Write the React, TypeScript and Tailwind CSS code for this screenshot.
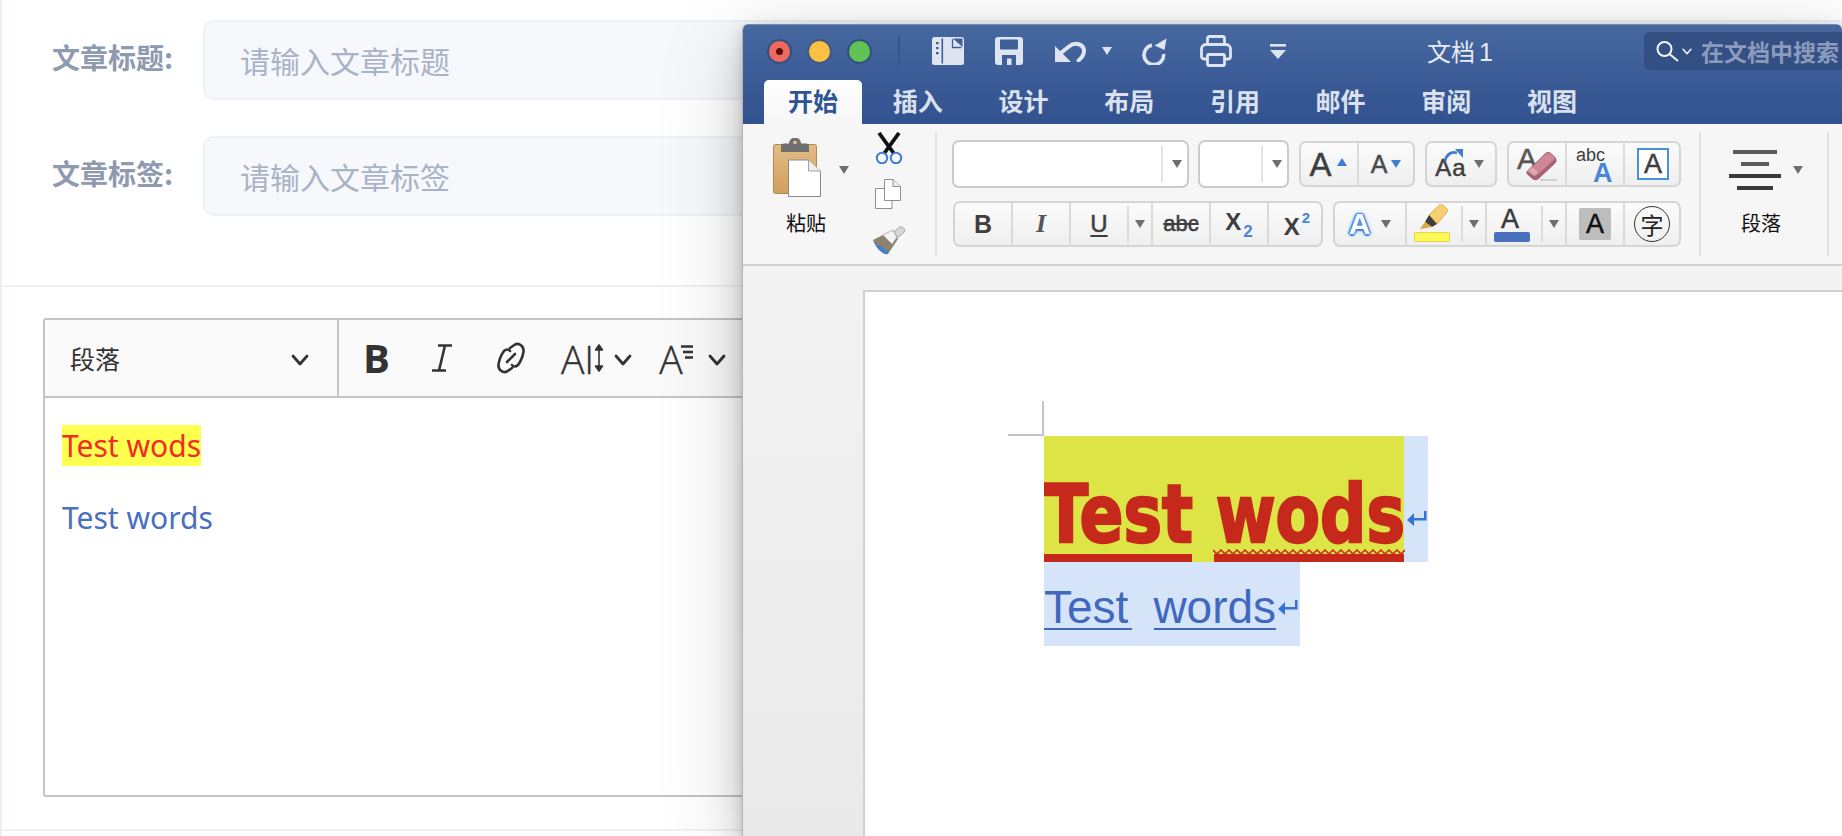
import React from "react";

const CJK = "font-['PingFang_SC','Noto_Sans_CJK_SC',sans-serif]";

function Caret({ className = "", up = false, color = "#6e6e6e", w = 10, h = 8 }: { className?: string; up?: boolean; color?: string; w?: number; h?: number }) {
  return (
    <svg width={w} height={h} viewBox="0 0 10 8" className={`shrink-0 ${className}`}>
      <path d={up ? "M5 0L10 8H0Z" : "M0 0H10L5 8Z"} fill={color} />
    </svg>
  );
}

function Chevron({ className = "", w = 18, h = 12, color = "#333" }: { className?: string; w?: number; h?: number; color?: string }) {
  return (
    <svg width={w} height={h} viewBox="0 0 18 12" className={`shrink-0 ${className}`}>
      <path d="M2 2L9 10L16 2" fill="none" stroke={color} strokeWidth="2.8" strokeLinecap="round" strokeLinejoin="round" />
    </svg>
  );
}

function ReturnMark({ className = "" }: { className?: string }) {
  return (
    <svg width="20" height="15" viewBox="0 0 20 15" className={className}>
      <path d="M0 9L7 2V7H17V0H19.5V9.5H7V15Z" fill="#3573d9" />
    </svg>
  );
}

const L = "#dfe5f0";
const D = "#3f5f99";

function SidebarIcon() {
  return (
    <svg width="32" height="28" viewBox="0 0 32 28" className="ml-[32px] shrink-0">
      <rect x="0" y="0" width="32" height="28" rx="2.5" fill={L} />
      <rect x="9.5" y="1.5" width="1.6" height="25" fill={D} />
      <rect x="4" y="5" width="2.6" height="2.2" fill={D} />
      <rect x="4" y="10" width="2.6" height="2.2" fill={D} />
      <rect x="4" y="15" width="2.6" height="2.2" fill={D} />
      <path d="M21 1.5H30.5V10Z" fill={D} />
      <path d="M20.5 2V10.5H29.5" fill="none" stroke={D} strokeWidth="1.3" />
    </svg>
  );
}
function SaveIcon() {
  return (
    <svg width="28" height="28" viewBox="0 0 28 28" className="ml-[31px] shrink-0">
      <rect x="0" y="0" width="28" height="28" rx="3" fill={L} />
      <rect x="5" y="2.5" width="18" height="10" rx="1" fill={D} />
      <rect x="7" y="18" width="14" height="10" fill={D} />
      <rect x="12" y="21.5" width="4.5" height="6.5" fill={L} />
    </svg>
  );
}
function UndoIcon() {
  return (
    <svg width="31" height="21" viewBox="0 0 31 21" className="ml-[32px] shrink-0">
      <path d="M0 5L16 21H0Z" fill={L} />
      <path d="M7 11L14 5.5C20 0.5 29 3 29 10C29 13.5 26.5 17 23.5 19.5" fill="none" stroke={L} strokeWidth="4" strokeLinecap="round" />
    </svg>
  );
}
function RedoIcon() {
  return (
    <svg width="25" height="27" viewBox="0 0 25 27" className="ml-[30px] shrink-0">
      <path d="M10 7.2A9.8 9.8 0 1 0 21.6 16" fill="none" stroke={L} strokeWidth="3.6" strokeLinecap="butt" />
      <path d="M12.5 7.5L24.5 0.5L22.5 12Z" fill={L} />
    </svg>
  );
}
function PrintIcon() {
  return (
    <svg width="32" height="32" viewBox="0 0 32 32" className="ml-[33px] shrink-0">
      <path d="M7.5 11V3.5A2 2 0 0 1 9.5 1.5H22.5A2 2 0 0 1 24.5 3.5V11" fill="none" stroke={L} strokeWidth="2.8" />
      <path d="M7 24H4A2.5 2.5 0 0 1 1.5 21.5V14A4.5 4.5 0 0 1 6 9.5H26A4.5 4.5 0 0 1 30.5 14V21.5A2.5 2.5 0 0 1 28 24H25" fill="none" stroke={L} strokeWidth="2.8" />
      <rect x="7.5" y="19.5" width="17" height="11" rx="1.5" fill="none" stroke={L} strokeWidth="2.8" />
    </svg>
  );
}
function CustomIcon() {
  return (
    <svg width="16" height="15" viewBox="0 0 16 15" className="ml-[38px] shrink-0">
      <rect x="0" y="0" width="16" height="2.6" fill={L} />
      <path d="M0 6H16L8 15Z" fill={L} />
    </svg>
  );
}
function SearchIcon() {
  return (
    <svg width="23" height="21" viewBox="0 0 23 21" className="ml-[12px] shrink-0">
      <circle cx="8.5" cy="8" r="7" fill="none" stroke="#f2f4f8" strokeWidth="2" />
      <path d="M13.5 13L22 20" stroke="#f2f4f8" strokeWidth="2" />
    </svg>
  );
}
function ClipboardIcon() {
  return (
    <svg width="48" height="60" viewBox="0 0 48 60" className="block">
      <defs>
        <linearGradient id="cb" x1="0" x2="0" y1="0" y2="1">
          <stop offset="0" stopColor="#e2bd86" />
          <stop offset="1" stopColor="#d09f5e" />
        </linearGradient>
      </defs>
      <rect x="0.5" y="6.5" width="43" height="49" rx="2" fill="url(#cb)" stroke="#b88a4a" />
      <path d="M8 15V9.5A3 3 0 0 1 11 6.5H16C16 2 20 0.5 22 0.5C24 0.5 28 2 28 6.5H33A3 3 0 0 1 36 9.5V15Z" fill="#6f6f6f" transform="translate(0 -1)" />
      <circle cx="22" cy="4.5" r="1.8" fill="#e0c39a" />
      <path d="M15.5 22H35.5L47.5 33V58.5H15.5Z" fill="#fff" stroke="#8a8a8a" />
      <path d="M35.5 22V33H47.5" fill="#efefef" stroke="#a0a0a0" />
    </svg>
  );
}
function ScissorsIcon() {
  return (
    <svg width="28" height="32" viewBox="0 0 28 32" className="block">
      <path d="M4 1L20 23" stroke="#111" strokeWidth="3.8" />
      <path d="M24 1L8 23" stroke="#111" strokeWidth="3.8" />
      <circle cx="7" cy="26" r="5.2" fill="#f6f6f6" stroke="#3f7dd4" strokeWidth="2" />
      <circle cx="21" cy="26" r="5.2" fill="#f6f6f6" stroke="#3f7dd4" strokeWidth="2" />
    </svg>
  );
}
function CopyIcon() {
  return (
    <svg width="26" height="30" viewBox="0 0 26 30" className="block">
      <path d="M0.5 9.5H10L17 15V29.5H0.5Z" fill="#fff" stroke="#8f8f8f" />
      <path d="M9.5 0.5H18L25.5 7.5V21.5H9.5Z" fill="#fff" stroke="#8f8f8f" />
      <path d="M18 0.5V7.5H25.5" fill="#eee" stroke="#8f8f8f" />
    </svg>
  );
}
function BrushIcon() {
  return (
    <svg width="32" height="29" viewBox="0 0 32 29" className="block">
      <path d="M0 14L20 4L25 13L15 28C11 29 4 24 0 14Z" fill="#8d8270" />
      <path d="M0 14C3 19 7 21 9 20C9 23 12 24 15 24L15 28C11 29 4 24 0 14Z" fill="#3f7dd4" />
      <path d="M10 9L20 4L24 11L19 18Z" fill="#f4f4f4" stroke="#b5b5b5" />
      <path d="M21 6L26 1.5C28 0 31 1 31.5 4C32 6 30 7.5 28 9L24.5 11.5Z" fill="#d6d6d6" stroke="#a5a5a5" />
    </svg>
  );
}
function EraserIcon() {
  return (
    <svg width="31" height="31" viewBox="0 0 31 31" className="absolute left-[17px] top-[8px]">
      <path d="M14 29H31" stroke="#c4c4c4" strokeWidth="1.6" />
      <path d="M1.5 20L19 3C21 1 23 1 25 2.5L29 6.5C30.5 8.5 30.5 10 29 12L13 27C11 29 9 29 7 28L2 23.5C0.5 22.5 0.5 21 1.5 20Z" fill="#cd8796" stroke="#9e5a69" />
      <path d="M2 23.5L7 28C9 29 11 29 13 27L29 12C30 10.5 30.5 9 29.5 7.5L11 24C9.5 25 8 25 7 24L1.5 20C0.5 21 0.5 22.5 2 23.5Z" fill="#a8626f" />
      <path d="M2 20L8 25L12 21L6 16Z" fill="#e2b6be" opacity="0.7" />
    </svg>
  );
}
function Highlighter() {
  return (
    <svg width="28" height="26" viewBox="0 0 28 26" className="absolute left-[13px] top-[1px]">
      <path d="M9 11L20 0.5C21 0 22 0 23 1L27 5C28 6 28 7 27 8L17 20Z" fill="#f8d071" stroke="#dcae50" />
      <path d="M9 11L17 20L12 23L5 18Z" fill="#3e3e3e" />
      <path d="M5 18L12 23L0 25Z" fill="#d9a740" />
    </svg>
  );
}

function Sep({ light = false, className = "" }: { light?: boolean; className?: string }) {
  return light ? <span className={`w-[2px] h-[36px] shrink-0 bg-[#dcdcdc] ${className}`} /> : <span className={`w-[2px] shrink-0 self-stretch bg-[#dadada] ${className}`} />;
}

function Cell({ w, children, className = "" }: { w: string; children?: React.ReactNode; className?: string }) {
  return <div className={`${w} shrink-0 relative h-full flex items-center justify-center ${className}`}>{children}</div>;
}

const groupCls = "h-[46px] shrink-0 flex items-center rounded-[7px] border-2 border-[#d5d5d5] bg-gradient-to-b from-[#fbfbfb] to-[#efefef] overflow-hidden text-[#3e3e3e] font-['Liberation_Sans',sans-serif]";
const heavy = "[-webkit-text-stroke:0.5px_currentColor]";

function DropBox({ w, sepLeft }: { w: string; sepLeft: string }) {
  return (
    <div className={`${w} h-[48px] shrink-0 flex items-center rounded-[7px] border-2 border-[#cbcbcb] bg-white`}>
      <span className={`${sepLeft}`} />
      <span className="w-[2px] h-[36px] bg-[#e4e4e4]" />
      <Caret className="ml-[9px]" />
    </div>
  );
}

function Ribbon() {
  return (
    <div className="h-[142px] shrink-0 flex bg-[#f6f6f6] border-b-2 border-[#d2d2d2]">
      {/* clipboard */}
      <div className="w-[122px] shrink-0 relative pt-[14px] pl-[30px]">
        <div className="flex items-start">
          <ClipboardIcon />
          <Caret className="ml-[18px] mt-[28px]" />
        </div>
        <div className={`${CJK} w-[66px] text-center text-[20px] leading-[24px] text-[#111] mt-[13px]`}>粘贴</div>
      </div>
      <div className="w-[70px] shrink-0 flex flex-col items-start pl-[10px]">
        <div className="mt-[8px]"><ScissorsIcon /></div>
        <div className="mt-[15px]"><CopyIcon /></div>
        <div className="mt-[17px] -ml-[2px]"><BrushIcon /></div>
      </div>
      <div className="w-[2px] h-[124px] mt-[8px] bg-[#e2e2e2] shrink-0" />
      {/* font */}
      <div className="shrink-0 pl-[15px] w-[762px] pt-[16px] flex flex-col">
        <div className="flex items-center h-[48px]">
          <DropBox w="w-[237px]" sepLeft="w-[207px]" />
          <div className="w-[9px] shrink-0" />
          <DropBox w="w-[91px]" sepLeft="w-[61px]" />
          <div className="w-[10px] shrink-0" />
          <div className={`${groupCls} w-[116px]`}>
            <Cell w="w-[56px]">
              <span className={`text-[33px] leading-none ${heavy}`}>A</span>
              <Caret up color="#3f7dd4" w={14} h={8} className="ml-[3px] mb-[4px]" />
            </Cell>
            <Sep />
            <Cell w="w-[56px]">
              <span className={`text-[25px] leading-none text-[#4a4a4a] ${heavy}`}>A</span>
              <Caret color="#3f7dd4" w={14} h={8} className="ml-[2px]" />
            </Cell>
          </div>
          <div className="w-[10px] shrink-0" />
          <div className={`${groupCls} w-[72px]`}>
            <Cell w="w-[48px]">
              <span className={`text-[24px] leading-none mt-[8px] tracking-[1px] ${heavy}`}>Aa</span>
              <svg width="20" height="13" viewBox="0 0 20 13" className="absolute left-[17px] top-[6px]">
                <path d="M1 12C2 6 7 2 13 4" fill="none" stroke="#3f7dd4" strokeWidth="2.8" />
                <path d="M11 0H19V9Z" fill="#3f7dd4" />
              </svg>
            </Cell>
            <Caret className="ml-[-1px]" />
          </div>
          <div className="w-[10px] shrink-0" />
          <div className={`${groupCls} w-[174px]`}>
            <Cell w="w-[56px]" className="justify-start">
              <span className={`absolute left-[8px] top-[1px] text-[30px] leading-none text-[#555] ${heavy}`}>A</span>
              <EraserIcon />
            </Cell>
            <Sep />
            <Cell w="w-[56px]">
              <span className="absolute left-[9px] top-[5px] text-[18px] leading-[15px] text-[#3e3e3e]">abc</span>
              <span className="absolute left-[26px] top-[20px] text-[27px] font-bold leading-[20px] text-[#4a86d8]">A</span>
            </Cell>
            <Sep />
            <Cell w="w-[56px]">
              <span className={`w-[32px] h-[32px] flex items-center justify-center border-2 border-[#4a8fe0] text-[27px] leading-none bg-white ${heavy}`}>A</span>
            </Cell>
          </div>
        </div>
        <div className="flex items-center h-[46px] mt-[13px] ml-[1px]">
          <div className={`${groupCls} w-[370px]`}>
            <Cell w="w-[56px]"><span className="text-[25px] font-bold leading-none">B</span></Cell>
            <Sep />
            <Cell w="w-[56px]"><span className="text-[26px] italic font-bold font-['Liberation_Serif',serif] text-[#555] leading-none">I</span></Cell>
            <Sep />
            <Cell w="w-[56px]"><span className={`text-[24px] leading-none underline underline-offset-[3px] decoration-2 ${heavy}`}>U</span></Cell>
            <Sep light />
            <Cell w="w-[22px]"><Caret /></Cell>
            <Sep />
            <Cell w="w-[56px]"><span className={`text-[22px] leading-none line-through decoration-2 ${heavy}`}>abc</span></Cell>
            <Sep />
            <Cell w="w-[56px]">
              <span className="text-[24px] font-bold leading-none mb-[5px]">X</span>
              <span className="text-[17px] font-bold leading-none text-[#4a86d8] ml-[2px] mt-[14px]">2</span>
            </Cell>
            <Sep />
            <Cell w="w-[56px]">
              <span className="text-[24px] font-bold leading-none mt-[5px]">X</span>
              <span className="text-[15px] font-bold leading-none text-[#4a86d8] ml-[2px] mb-[14px]">2</span>
            </Cell>
          </div>
          <div className="w-[10px] shrink-0" />
          <div className={`${groupCls} w-[348px]`}>
            <Cell w="w-[70px]">
              <span className="text-[30px] font-bold leading-none text-white [text-shadow:1.5px_0_1px_#3f86dd,-1.5px_0_1px_#3f86dd,0_1.5px_1px_#3f86dd,0_-1.5px_1px_#3f86dd,0_0_3px_#3f86dd,0_0_5px_#7db0ea]">A</span>
              <Caret className="ml-[11px]" />
            </Cell>
            <Sep />
            <Cell w="w-[54px]">
              <Highlighter />
              <span className="absolute left-[7px] top-[29px] w-[36px] h-[10px] rounded-[2px] bg-[#fdf757] border border-[#e4d94c]" />
            </Cell>
            <Sep light />
            <Cell w="w-[22px]"><Caret /></Cell>
            <Sep />
            <Cell w="w-[54px]">
              <span className={`absolute left-[14px] top-[3px] text-[27px] leading-none text-[#3a3a3a] ${heavy}`}>A</span>
              <span className="absolute left-[7px] top-[29px] w-[36px] h-[10px] rounded-[2px] bg-[#4b70bd]" />
            </Cell>
            <Sep light />
            <Cell w="w-[22px]"><Caret /></Cell>
            <Sep />
            <Cell w="w-[56px]">
              <span className={`w-[32px] h-[32px] flex items-center justify-center rounded-[2px] bg-[#bdbdbd] text-[27px] leading-none text-[#111] ${heavy}`}>A</span>
            </Cell>
            <Sep />
            <Cell w="w-[54px]">
              <span className={`${CJK} w-[36px] h-[36px] flex items-center justify-center rounded-full border-[1.5px] border-[#333] text-[23px] leading-none text-[#222]`}>字</span>
            </Cell>
          </div>
        </div>
      </div>
      <div className="w-[2px] h-[124px] mt-[8px] bg-[#e2e2e2] shrink-0" />
      {/* paragraph */}
      <div className="w-[126px] shrink-0 pt-[26px] pl-[28px] relative">
        <div className="flex items-start">
          <div className="w-[52px] flex flex-col items-center gap-[8px]">
            <span className="w-[44px] h-[4px] bg-[#5a5a5a]" />
            <span className="w-[28px] h-[4px] bg-[#5a5a5a]" />
            <span className="w-[52px] h-[4px] bg-[#3a3a3a]" />
            <span className="w-[36px] h-[4px] bg-[#3a3a3a]" />
          </div>
          <Caret className="ml-[12px] mt-[16px]" />
        </div>
        <div className={`${CJK} ml-[6px] w-[52px] text-center text-[20px] leading-[24px] text-[#111] mt-[21px]`}>段落</div>
      </div>
      <div className="w-[2px] h-[124px] mt-[8px] bg-[#e2e2e2] shrink-0" />
    </div>
  );
}

function WordWindow() {
  const tabs = ["插入", "设计", "布局", "引用", "邮件", "审阅", "视图"];
  return (
    <div className="absolute left-[742px] top-[24px] w-[1100px] h-[812px] flex flex-col rounded-t-[6px] overflow-hidden border-l border-[#b4b4b4]">
      <div className="h-[100px] shrink-0 flex flex-col justify-between bg-gradient-to-b from-[#46689f] to-[#32518f] border-t border-[#6f8ab5]">
        <div className="h-[52px] flex items-center -ml-px">
          <span className="ml-[25px] w-[25px] h-[25px] rounded-full bg-[#ee6a5f] border-2 border-[#35507f] flex items-center justify-center">
            <span className="w-[7px] h-[7px] rounded-full bg-[#5c0b06]" />
          </span>
          <span className="ml-[15px] w-[25px] h-[25px] rounded-full bg-[#fbbf44] border-2 border-[#3f5a85]" />
          <span className="ml-[15px] w-[25px] h-[25px] rounded-full bg-[#5fc454] border-2 border-[#35507f]" />
          <span className="ml-[26px] w-[2px] h-[32px] bg-[#38568c]" />
          <SidebarIcon />
          <SaveIcon />
          <UndoIcon />
          <Caret color={L} className="ml-[16px]" />
          <RedoIcon />
          <PrintIcon />
          <CustomIcon />
          <span className={`${CJK} ml-[141px] w-[68px] shrink-0 text-[24px] leading-[30px] text-[#e6eaf2] whitespace-nowrap`}>文档<span className="ml-[4px] font-['Liberation_Sans',sans-serif] text-[25px]">1</span></span>
          <div className="ml-[149px] flex-1 h-[38px] rounded-l-[6px] bg-[#334f84] flex items-center overflow-hidden">
            <SearchIcon />
            <Chevron w={10} h={7} color="#f2f4f8" className="ml-[3px]" />
            <span className={`${CJK} ml-[9px] text-[23px] font-semibold leading-none text-[#8b9bbd] whitespace-nowrap`}>在文档中搜索</span>
          </div>
        </div>
        <div className="h-[44px] flex items-end -ml-px">
          <div className={`${CJK} ml-[22px] w-[98px] h-[44px] pb-[4px] rounded-t-[5px] bg-gradient-to-b from-white to-[#f6f6f6] flex items-center justify-center text-[25px] font-semibold text-[#2f5597] leading-none`}>开始</div>
          <div className="w-[3px]" />
          {tabs.map((t) => (
            <div key={t} className={`${CJK} w-[105.7px] h-[44px] pb-[4px] flex items-center justify-center text-[25px] font-semibold text-[#dbe1ec] leading-none`}>{t}</div>
          ))}
        </div>
      </div>
      <Ribbon />
      <div className="flex-1 bg-gradient-to-b from-[#f3f3f3] to-[#e9e9e9] pl-[120px] pt-[24px] min-h-0">
        <div className="relative h-full bg-white border-l-2 border-t-2 border-[#d0d0d0] pl-[179px] pt-[144px] font-['Liberation_Sans',sans-serif]">
          <span className="absolute left-[177px] top-[109px] w-[2px] h-[35px] bg-[#c4c4c4]" />
          <span className="absolute left-[143px] top-[142px] w-[36px] h-[2px] bg-[#c4c4c4]" />
          <div className="relative w-[384px] h-[126px] bg-[#d6e4fa]">
            <div className="w-[360px] h-full bg-[#dce545] flex items-end overflow-hidden pb-[7px]">
              <span className="inline-block shrink-0 origin-left scale-x-[0.81] font-['DejaVu_Sans',sans-serif] text-[80px] leading-none font-bold text-[#c6291b] whitespace-pre [-webkit-text-stroke:2.5px_#c6291b]">Test wods</span>
            </div>
            <span className="absolute left-0 top-[118px] w-[148px] h-[8px] bg-[#c6291b]" />
            <span className="absolute left-[170px] top-[118px] w-[190px] h-[8px] bg-[#c6291b]" />
            <svg width="192" height="6" viewBox="0 0 192 6" className="absolute left-[169px] top-[113px]">
              <path d="M0 1L4 5L8 1L12 5L16 1L20 5L24 1L28 5L32 1L36 5L40 1L44 5L48 1L52 5L56 1L60 5L64 1L68 5L72 1L76 5L80 1L84 5L88 1L92 5L96 1L100 5L104 1L108 5L112 1L116 5L120 1L124 5L128 1L132 5L136 1L140 5L144 1L148 5L152 1L156 5L160 1L164 5L168 1L172 5L176 1L180 5L184 1L188 5L192 1" fill="none" stroke="#c6291b" strokeWidth="1.6" />
            </svg>
            <ReturnMark className="absolute left-[363px] top-[75px]" />
          </div>
          <div className="relative w-[256px] h-[84px] bg-[#d6e4fa]">
            <span className="absolute left-0 top-[18px] text-[46px] leading-[55px] text-[#4068bf] whitespace-pre">Test<span className="ml-[25px]">words</span></span>
            <span className="absolute left-0 top-[66px] w-[88px] h-[2px] bg-[#4068bf]" />
            <span className="absolute left-[110px] top-[66px] w-[122px] h-[2px] bg-[#4068bf]" />
            <ReturnMark className="absolute left-[234px] top-[38px]" />
          </div>
        </div>
      </div>
    </div>
  );
}

function FormRow({ label, placeholder, width }: { label: string; placeholder: string; width: string }) {
  return (
    <div className="flex items-center h-[80px]">
      <label className={`${CJK} w-[151px] shrink-0 pb-[6px] text-[28px] font-semibold text-[#8f9ab1] leading-none whitespace-nowrap`}>{label}</label>
      <input
        readOnly
        placeholder={placeholder}
        className={`${CJK} ${width} shrink-0 h-[80px] rounded-[10px] border-2 border-[#eef1f8] bg-[#f7f8fc] pl-[35px] text-[30px] placeholder:text-[#a9b3c7] outline-none`}
      />
    </div>
  );
}

export default function App() {
  return (
    <div className="relative w-[1842px] h-[836px] overflow-hidden bg-white">
      <div className="h-full border-l-2 border-[#e9edf6] flex flex-col">
        <div className="pl-[50px] pt-[20px] flex flex-col gap-[36px] h-[285px] shrink-0">
          <FormRow label="文章标题:" placeholder="请输入文章标题" width="w-[1700px]" />
          <FormRow label="文章标签:" placeholder="请输入文章标签" width="w-[600px]" />
        </div>
        <div className="h-[2px] shrink-0 bg-[#eef2f7]" />
        <div className="ml-[41px] mt-[31px] w-[800px] h-[479px] shrink-0 rounded-[3px] border-2 border-[#c4c4c4] flex flex-col">
          <div className="h-[78px] shrink-0 bg-[#fafafa] border-b-2 border-[#c4c4c4] flex items-center text-[#333]">
            <div className="w-[294px] shrink-0 h-full border-r-2 border-[#c4c4c4] flex items-center pl-[25px]">
              <span className={`${CJK} text-[25px] leading-none text-[#333]`}>段落</span>
              <Chevron className="ml-[171px] mt-[3px]" />
            </div>
            <span className="ml-[24px] text-[40px] font-bold leading-none font-['Open_Sans',sans-serif] text-[#333]">B</span>
            <svg width="22" height="28" viewBox="0 0 22 28" className="ml-[41px] shrink-0">
              <path d="M7 1.5H21M1 26.5H15M14 1.5L8 26.5" fill="none" stroke="#333" strokeWidth="2.6" />
            </svg>
            <svg width="30" height="32" viewBox="0 0 30 32" className="ml-[43px] shrink-0">
              <path d="M14 6L19 2.5C23 0.5 28 4 27.5 9.5C27 13 25 19 22 23C20 25 17 25 16 23M16 26L11 29.5C7 31.5 2 28 2.5 22.5C3 19 5 13 8 9C10 7 13 7 14 9M11 20L19 12" fill="none" stroke="#333" strokeWidth="2.6" strokeLinecap="round" />
            </svg>
            <span className="ml-[35px] text-[39px] font-light leading-none font-['Open_Sans',sans-serif] text-[#333] [-webkit-text-stroke:0.4px_#333]">AI</span>
            <svg width="8" height="28" viewBox="0 0 8 28" className="ml-[1px] shrink-0">
              <path d="M4 1V27M0.5 6L4 1L7.5 6ZM0.5 22L4 27L7.5 22Z" fill="#333" stroke="#333" strokeWidth="1.6" />
            </svg>
            <Chevron className="ml-[11px] mt-[3px]" />
            <span className="ml-[27px] text-[39px] font-light leading-none font-['Open_Sans',sans-serif] text-[#333] [-webkit-text-stroke:0.4px_#333]">A</span>
            <svg width="12" height="14" viewBox="0 0 12 14" className="-ml-[2px] mb-[13px] shrink-0">
              <path d="M0 1.5H12M2 7H12M4 12.5H12" stroke="#333" strokeWidth="2.6" />
            </svg>
            <Chevron className="ml-[15px] mt-[3px]" />
          </div>
          <div className="pl-[17px] pt-[27px] font-['Noto_Sans',sans-serif] text-[30px] leading-[41px]">
            <p><span className="bg-[#ffff4f] text-[#f32c27]">Test wods</span></p>
            <p className="mt-[31px] text-[#4a6fc0]">Test words</p>
          </div>
        </div>
        <div className="mt-[32px] h-[2px] shrink-0 bg-[#eef2f7]" />
      </div>
      <div className="absolute left-[742px] top-[24px] w-[1100px] h-[812px] rounded-t-[6px] shadow-[0_4px_12px_rgba(0,0,0,0.14),0_16px_36px_rgba(0,0,0,0.16),0_20px_90px_rgba(0,0,0,0.16)]" />
      <WordWindow />
    </div>
  );
}
